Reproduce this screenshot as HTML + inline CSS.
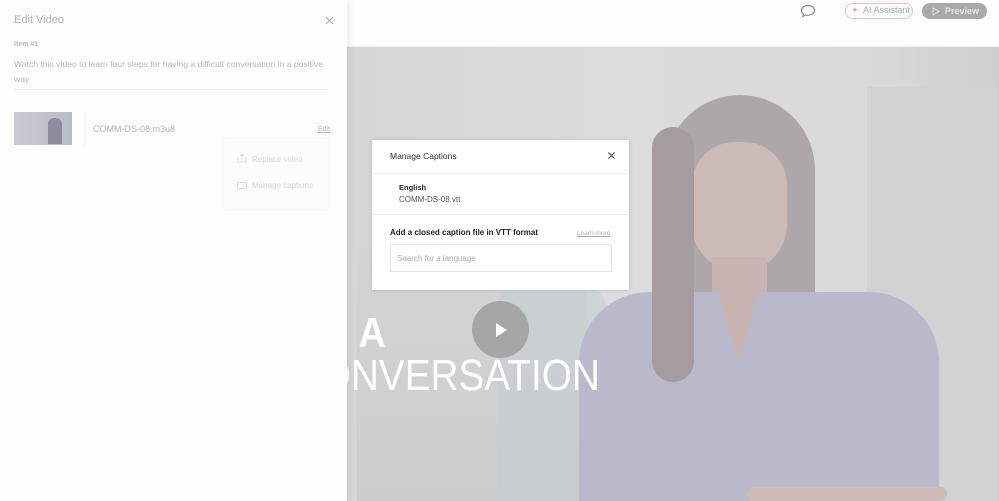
<!DOCTYPE html>
<html><head><meta charset="utf-8"><style>
*{margin:0;padding:0;box-sizing:border-box}
html,body{width:999px;height:501px;overflow:hidden}
body{position:relative;font-family:"Liberation Sans",sans-serif;background:#fff}
.top{position:absolute;left:0;top:0;width:999px;height:47px;background:#fdfdfd;border-bottom:1px solid #f0f0f0}
.video{position:absolute;left:347px;top:47px;width:652px;height:454px;background:linear-gradient(90deg,#d6d6d6,#dcdcdc 40%,#d9d9d9 80%,#cfcfcf);overflow:hidden}
.abs{position:absolute;white-space:nowrap}
.panel{position:absolute;left:0;top:0;width:347px;height:501px;background:#fdfdfd;box-shadow:2px 0 6px rgba(0,0,0,.08)}
.modal{position:absolute;left:372px;top:140px;width:257px;height:150px;background:#fff;box-shadow:0 0 4px rgba(0,0,0,.15)}
</style></head><body>
<div class="top">
  <svg class="abs" style="left:800px;top:4px" width="16" height="14" viewBox="0 0 16 14"><path d="M8 1.5C4.2 1.5 1.5 3.6 1.5 6.3c0 1.4.7 2.6 1.9 3.4L2.8 12.5l3-1.6c.7.2 1.4.3 2.2.3 3.8 0 6.5-2.1 6.5-4.8S11.8 1.5 8 1.5z" fill="none" stroke="#888" stroke-width="1.2"/></svg>
  <div class="abs" style="left:845px;top:3px;width:68px;height:16px;border-radius:8px;border:1.5px solid #e6b8f0;border-right-color:#a8d8f0;font-size:9px;color:#a8a8a8;line-height:13px;padding-left:17px">AI Assistant</div>
  <div class="abs" style="left:851px;top:5px;font-size:9px;color:#c8a8e0">✦</div>
  <div class="abs" style="left:922px;top:3px;width:65px;height:16px;border-radius:8px;background:#a9a9a9;color:#e6e6e6;font-size:9px;font-weight:bold;line-height:16px;padding-left:23px">Preview</div>
  <svg class="abs" style="left:932px;top:7px" width="8" height="9"><path d="M1 1L7 4.5L1 8Z" fill="none" stroke="#e6e6e6" stroke-width="1"/></svg>
</div>
<div class="video">
  <div class="abs" style="left:10px;top:200px;width:230px;height:254px;background:linear-gradient(#d4d4d4,#cdcdcd)"></div>
  <div class="abs" style="left:150px;top:235px;width:110px;height:219px;background:#c4cfd2;border-radius:30px 30px 0 0;opacity:.6"></div>
  <div class="abs" style="left:520px;top:40px;width:130px;height:414px;background:#d2d2d2"></div>
  <div class="abs" style="left:318px;top:48px;width:150px;height:260px;background:#aea7a9;border-radius:75px 75px 30px 40px"></div>
  <div class="abs" style="left:345px;top:95px;width:95px;height:130px;background:#ccbab6;border-radius:45px 45px 50px 50px"></div>
  <div class="abs" style="left:365px;top:210px;width:55px;height:45px;background:#c8b5b1"></div>
  <div class="abs" style="left:232px;top:245px;width:360px;height:209px;background:#bab9cb;border-radius:70px 70px 0 0"></div>
  <div class="abs" style="left:372px;top:245px;width:40px;height:70px;background:#c8b5b1;clip-path:polygon(0 0,100% 0,50% 100%)"></div>
  <div class="abs" style="left:305px;top:80px;width:42px;height:255px;background:#a49c9e;border-radius:25px"></div>
  <div class="abs" style="left:400px;top:440px;width:200px;height:14px;background:#cdbcb8;border-radius:7px"></div>
  <div class="abs" style="left:10px;top:262px;font-size:42px;color:#fff;font-weight:bold;transform:scaleX(.9)">A</div>
  <div class="abs" style="right:399px;top:304px;font-size:44px;color:#fff;transform:scaleX(.88);transform-origin:right">CONVERSATION</div>
  <div class="abs" style="left:125px;top:254px;width:57px;height:57px;border-radius:50%;background:#a6a6a6"></div>
  <svg class="abs" style="left:149px;top:276px" width="12" height="14"><path d="M0 0L11 7L0 14Z" fill="#fff"/></svg>
</div>
<div class="panel">
  <div class="abs" style="left:14px;top:14px;font-size:11px;color:#b0b0b0">Edit Video</div>
  <svg class="abs" style="left:325px;top:16px" width="9" height="9"><path d="M1 1L8 8M8 1L1 8" stroke="#b0b0b0" stroke-width="1.2"/></svg>
  <div class="abs" style="left:14px;top:41px;font-size:7px;color:#b8b8b8;font-weight:bold">Item #1</div>
  <div class="abs" style="left:14px;top:57px;font-size:8.6px;color:#b8b8b8;line-height:15px;white-space:normal;width:320px">Watch this video to learn four steps for having a difficult conversation in a positive way.</div>
  <div class="abs" style="left:14px;top:89px;width:315px;height:1px;background:#f0f0f0"></div>
  <div class="abs" style="left:14px;top:112px;width:58px;height:33px;background:linear-gradient(90deg,#c8ccd4,#b9bcc6);"></div>
  <div class="abs" style="left:48px;top:118px;width:14px;height:26px;background:#8e8aa0;border-radius:6px 6px 0 0"></div>
  <div class="abs" style="left:84px;top:112px;width:1px;height:34px;background:#f2f2f2"></div>
  <div class="abs" style="left:93px;top:124px;font-size:9px;color:#b4b4b4">COMM-DS-08.m3u8</div>
  <div class="abs" style="left:318px;top:126px;font-size:7px;color:#b8b8b8;text-decoration:underline">Edit</div>
  <div class="abs" style="left:223px;top:139px;width:106px;height:70px;background:#fcfcfc;box-shadow:0 0 3px rgba(0,0,0,.05)"></div>
  <svg class="abs" style="left:237px;top:153px" width="10" height="10"><path d="M1 4V9H9V4M5 7V1M3 3L5 1L7 3" fill="none" stroke="#d8d8d8"/></svg>
  <div class="abs" style="left:252px;top:155px;font-size:8px;color:#d6d6d6">Replace video</div>
  <div class="abs" style="left:237px;top:182px;width:10px;height:7px;border:1px solid #dcdcdc;border-radius:1px"></div>
  <div class="abs" style="left:252px;top:181px;font-size:8px;color:#d6d6d6">Manage captions</div>
</div>
<div class="modal">
  <div class="abs" style="left:18px;top:11px;font-size:8.5px;color:#333">Manage Captions</div>
  <svg class="abs" style="left:236px;top:12px" width="7" height="7"><path d="M0.5 0.5L6.5 6.5M6.5 0.5L0.5 6.5" stroke="#444" stroke-width="1.1"/></svg>
  <div class="abs" style="left:0;top:33px;width:257px;height:1px;background:#eee"></div>
  <div class="abs" style="left:27px;top:43px;font-size:7.5px;color:#222;font-weight:bold">English</div>
  <div class="abs" style="left:27px;top:55px;font-size:8px;color:#555">COMM-DS-08.vtt</div>
  <div class="abs" style="left:0;top:74px;width:257px;height:1px;background:#eee"></div>
  <div class="abs" style="left:18px;top:88px;font-size:8px;color:#222;font-weight:bold">Add a closed caption file in VTT format</div>
  <div class="abs" style="left:205px;top:90px;font-size:6.5px;color:#aaa;text-decoration:underline">Learn more</div>
  <div class="abs" style="left:18px;top:104px;width:222px;height:28px;border:1px solid #e6e6e6"></div>
  <div class="abs" style="left:25px;top:114px;font-size:8px;color:#aaa">Search for a language</div>
</div>
</body></html>
